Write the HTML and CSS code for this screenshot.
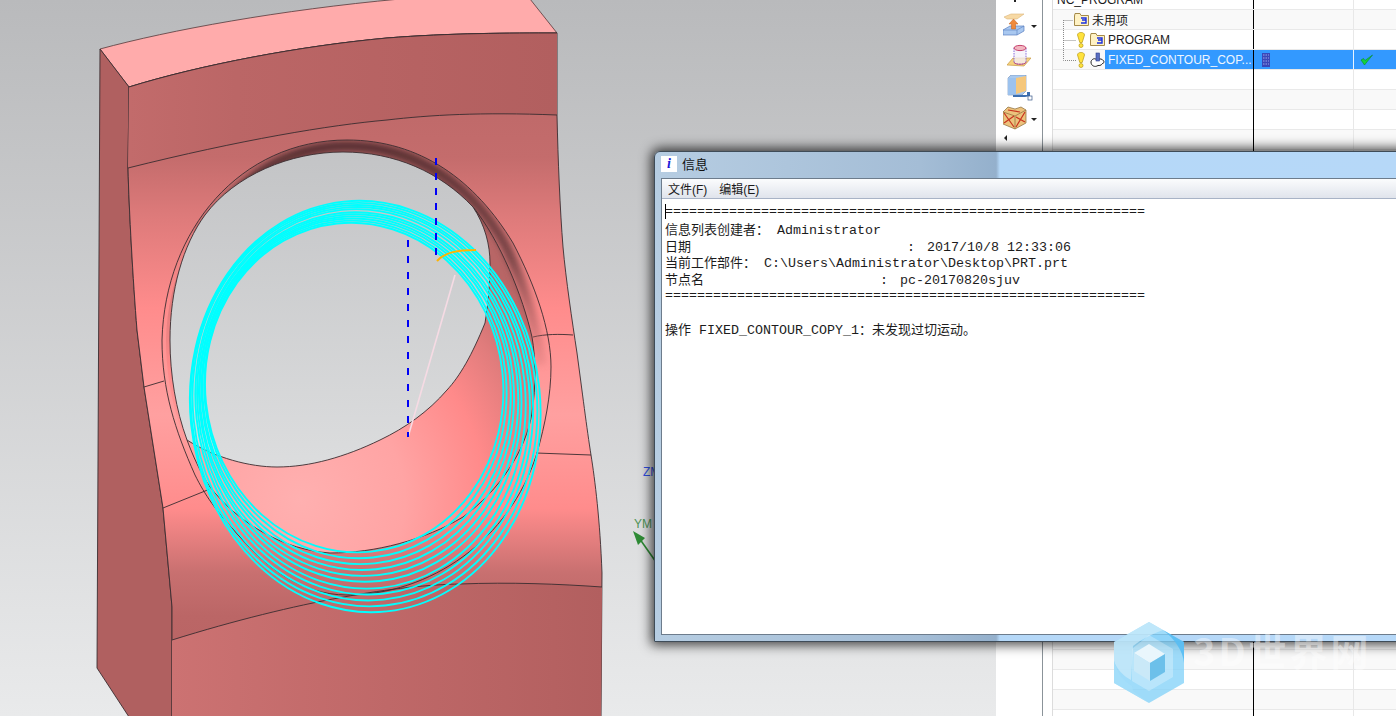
FILE: index.html
```html
<!DOCTYPE html>
<html lang="zh-CN">
<head>
<meta charset="utf-8">
<title>信息</title>
<link rel="stylesheet" href="styles.css">
</head>
<body>
<div class="screen">
  <div class="viewport">
    <svg class="model" width="996" height="716" viewBox="0 0 996 716">
      <defs>
        <linearGradient id="frontGrad" x1="0" y1="0" x2="0" y2="716" gradientUnits="userSpaceOnUse">
          <stop offset="0" stop-color="#b46464"/>
          <stop offset=".22" stop-color="#c46c6c"/>
          <stop offset=".3" stop-color="#dd7a7a"/>
          <stop offset=".43" stop-color="#ff8c8c"/>
          <stop offset=".58" stop-color="#ffa0a0"/>
          <stop offset=".71" stop-color="#ff8c8c"/>
          <stop offset=".8" stop-color="#c87070"/>
          <stop offset=".86" stop-color="#bb6666"/>
          <stop offset="1" stop-color="#b66262"/>
        </linearGradient>
        <linearGradient id="baseGrad" x1="172" y1="0" x2="603" y2="0" gradientUnits="userSpaceOnUse">
          <stop offset="0" stop-color="#cc7272"/>
          <stop offset=".5" stop-color="#bf6868"/>
          <stop offset="1" stop-color="#b25f5f"/>
        </linearGradient>
        <linearGradient id="upperGrad" x1="129" y1="0" x2="557" y2="0" gradientUnits="userSpaceOnUse">
          <stop offset="0" stop-color="#c26b6b"/>
          <stop offset=".25" stop-color="#bb6666"/>
          <stop offset="1" stop-color="#b25f5f"/>
        </linearGradient>
        <radialGradient id="wallGrad" cx="300" cy="500" r="300" gradientUnits="userSpaceOnUse">
          <stop offset="0" stop-color="#ffb0b0"/>
          <stop offset=".35" stop-color="#ffa4a4"/>
          <stop offset=".62" stop-color="#ff8a8a"/>
          <stop offset=".8" stop-color="#e07c7c"/>
          <stop offset="1" stop-color="#b86666"/>
        </radialGradient>
        <linearGradient id="rimGrad" x1="0" y1="146" x2="0" y2="370" gradientUnits="userSpaceOnUse">
          <stop offset="0" stop-color="#5a3234"/>
          <stop offset=".5" stop-color="#7c4648"/>
          <stop offset="1" stop-color="#c87070" stop-opacity=".2"/>
        </linearGradient>
        <linearGradient id="holeGrad" x1="0" y1="150" x2="0" y2="470" gradientUnits="userSpaceOnUse">
          <stop offset="0" stop-color="#c3c4c6"/>
          <stop offset="1" stop-color="#dcddde"/>
        </linearGradient>
        <linearGradient id="bgGrad" x1="0" y1="0" x2="0" y2="1">
          <stop offset="0" stop-color="#b9babc"/>
          <stop offset="1" stop-color="#e9eaeb"/>
        </linearGradient>
        <filter id="soft" x="-20%" y="-20%" width="140%" height="140%"><feGaussianBlur stdDeviation="3"/></filter>
        <clipPath id="rimClip"><path d="M162 340 C165 230 240 140 347 140 C420 140 475 180 513 243 C535 285 551 330 551 367 C551 395 545 425 537 453 C510 540 430 595 347 595 C300 595 265 565 240 537 C215 510 205 495 195 475 C175 430 162 390 162 340 Z"/></clipPath>
      </defs>
      <rect width="996" height="716" fill="url(#bgGrad)"/>
      <path d="M100 49 C170 30 280 10 400 -1 L530 -1 L557 33 C510 33 450 33 387 38 C300 46 200 65 129 87 Z" fill="#ffabab" stroke="#55383a" stroke-width=".8"/>
      <path d="M100 49 L129 87 L128 168 C129 210 133 280 137 330 L144 387 L163 508 L172 607 L172 720 L131 720 L97 668 Z" fill="#b06060" stroke="#3a2c30" stroke-width=".9"/>
      <path d="M129 87 C200 65 300 46 387 38 C450 33 510 33 557 33 L557 115 C558 160 560 210 563 247 C566 280 572 320 577 353 C582 390 587 430 591 455 C595 480 600 520 602 573 L601 720 L172 720 L172 607 L163 508 L144 387 L137 330 C133 280 129 210 128 168 Z" fill="url(#frontGrad)" stroke="#3a2c30" stroke-width=".9"/>
      <path d="M129 87 C200 65 300 46 387 38 C450 33 510 33 557 33 L557 115 C480 112 430 115 387 120 C330 125 240 140 128 168 Z" fill="url(#upperGrad)"/>
      <path d="M172 640 C300 600 400 585 460 584 C510 582 560 584 602 587 L601 720 L172 720 Z" fill="url(#baseGrad)"/>
      <g fill="none" stroke="#3a2c30" stroke-width=".9">
        <path d="M129 87 C200 65 300 46 387 38 C450 33 510 33 557 33"/>
        <path d="M128 168 C240 140 330 125 387 120 C430 115 480 112 557 115"/>
        <path d="M144 387 L164 381"/>
        <path d="M533 337 C545 334 560 334 573 335"/>
        <path d="M163 508 L210 489"/>
        <path d="M536 453 L591 455"/>
        <path d="M172 640 C300 600 400 585 460 584 C510 582 560 584 602 587"/>
      </g>
      <path d="M166 340 C168 235 245 143 347 143 C400 143 445 175 473 207 C500 240 523 297 532 337 C536 360 536 385 532 413 C526 450 500 490 463 517 C425 540 375 553 330 553 C285 550 240 525 210 487 C185 450 166 400 166 340 Z" fill="url(#wallGrad)"/>
      <g clip-path="url(#rimClip)">
        <path d="M200 235 C240 175 290 146 347 146 C420 146 475 190 505 245 C522 280 535 320 541 365" fill="none" stroke="url(#rimGrad)" stroke-width="11" filter="url(#soft)"/>
      </g>
      <path d="M162 340 C165 230 240 140 347 140 C420 140 475 180 513 243 C535 285 551 330 551 367 C551 395 545 425 537 453 C510 540 430 595 347 595 C300 595 265 565 240 537 C215 510 205 495 195 475 C175 430 162 390 162 340 Z" fill="none" stroke="#3a2c30" stroke-width=".9"/>
      <path d="M473 207 C500 240 523 297 532 337 C536 360 536 385 532 413 C526 450 500 490 463 517 C425 540 375 553 330 553 C285 550 240 525 210 487 C200 472 193 456 187 440" fill="none" stroke="#3a2c30" stroke-width=".9"/>
      <path d="M187 440 C176 410 170 375 170 340 C170 290 183 245 205 215 C235 175 290 152 343 152 C395 152 440 172 473 207 C485 225 490 245 490 263 C490 285 488 305 485 323 C472 355 460 376 447 390 C428 412 405 428 380 440 C345 457 310 467 277 467 C250 467 215 458 187 440 Z" fill="url(#holeGrad)" stroke="#3a2c30" stroke-width=".9"/>
      <g class="rings" transform="rotate(-6 360 395)">
        <ellipse cx="355" cy="387" rx="149" ry="165"/>
        <ellipse cx="356" cy="389" rx="151" ry="169"/>
        <ellipse cx="357" cy="391" rx="154" ry="173"/>
        <ellipse cx="358" cy="393" rx="156" ry="177"/>
        <ellipse cx="359" cy="395" rx="159" ry="181"/>
        <ellipse cx="360" cy="397" rx="161" ry="185"/>
        <ellipse cx="361" cy="399" rx="164" ry="190"/>
        <ellipse cx="362" cy="401" rx="167" ry="194"/>
        <ellipse cx="362" cy="403" rx="170" ry="198"/>
        <ellipse cx="363" cy="405" rx="173" ry="202"/>
        <ellipse cx="364" cy="407" rx="175" ry="206"/>
      </g>
      <path d="M408 437 L455 275" stroke="#f6dbe4" stroke-width="1.6" fill="none"/>
      <path d="M436 158 L436 262" stroke="#0000f5" stroke-width="2" stroke-dasharray="7 8" fill="none"/>
      <path d="M408 240 L408 437" stroke="#0000f5" stroke-width="2" stroke-dasharray="7 9" fill="none"/>
      <path d="M437 261 C445 252 458 250 476 250" stroke="#ffb400" stroke-width="2" fill="none"/>
      <text class="axis axis-z" x="643" y="476">ZM</text>
      <text class="axis axis-y" x="634" y="528">YM</text>
      <path d="M637 535 L656 562" stroke="#2e8b35" stroke-width="1.6" fill="none"/>
      <path d="M633 531 L645 538 L638 545 Z" fill="#2e8b35"/>
    </svg>
  </div>

  <div class="panel">
    <div class="toolbar">
      <span class="tick"></span>
      <div class="tool">
        <svg width="24" height="24" viewBox="0 0 24 24">
          <path d="M1 4 L8 1 L21 1 L14 6 L4 6 Z" fill="#f7d9a4" stroke="#dcb67a" stroke-width=".6"/>
          <path d="M0 17 L7 13 L21 13 L21 18 L14 22 L0 22 Z" fill="#a9c8f0" stroke="#5a7fc0" stroke-width=".7"/>
          <path d="M0 17 L14 17 L21 13 M14 17 L14 22" stroke="#5a7fc0" stroke-width=".6" fill="none"/>
          <path d="M10.5 6 L15 11 L12.5 11 L12.5 16 L8.5 16 L8.5 11 L6 11 Z" fill="#f08a3c" stroke="#c06020" stroke-width=".5"/>
        </svg>
        <span class="caret"></span>
      </div>
      <div class="tool tool-shift">
        <svg width="24" height="24" viewBox="0 0 24 24">
          <path d="M0 21 L6 14 L24 14 L17 22 Z" fill="#f5d27e" stroke="#c89b45" stroke-width=".7"/>
          <path d="M7 4 L7 18 C7 21 19 21 19 18 L19 4" fill="#f4f0fa" fill-opacity=".75" stroke="#7a5ad8" stroke-width=".9" stroke-dasharray="1.5 1"/>
          <ellipse cx="13" cy="4" rx="6" ry="2.6" fill="#f2b6c0" stroke="#c03060" stroke-width=".9"/>
          <path d="M7 18 C7 21 19 21 19 18" fill="none" stroke="#c03060" stroke-width=".7"/>
        </svg>
      </div>
      <div class="tool tool-shift">
        <svg width="26" height="26" viewBox="0 0 26 26">
          <path d="M1 3 L4 0 L19 0 L19 16 L15 20 L1 20 Z" fill="#a9c9ee" stroke="#6e8fb8" stroke-width=".6"/>
          <path d="M9 3 L19 1 L19 16 L9 19 Z" fill="#f5c77c"/>
          <path d="M1 3 L9 3 L9 19 L1 20 Z" fill="#9cc2ee"/>
          <path d="M6 20 L20 20 L20 17 L23 17 L23 21 L18 22 L6 22 Z" fill="#3d6fb0"/>
          <rect x="21" y="21" width="4" height="4" fill="#fff" stroke="#39598a" stroke-width=".7"/>
        </svg>
      </div>
      <div class="tool">
        <svg width="24" height="24" viewBox="0 0 24 24">
          <path d="M0 6 L5 1 L12 3 L18 1 L23 4 L23 17 L12 23 L0 18 Z" fill="#ecc27c" stroke="#8a6a3a" stroke-width=".7"/>
          <path d="M0 6 L12 10 L23 4 M12 10 L12 23" fill="none" stroke="#8a6a3a" stroke-width=".7"/>
          <path d="M1 7 L11 21 M11 10 L1 17 M13 11 L22 16 M22 6 L13 21 M5 4 L17 6" fill="none" stroke="#c8331f" stroke-width="1.2"/>
        </svg>
        <span class="caret"></span>
      </div>
      <span class="more"></span>
    </div>
    <div class="gutter"></div>
    <div class="tree">
      <div class="row row-alt"><span class="cell-name name-root">NC_PROGRAM</span></div>
      <div class="row row-alt">
        <div class="cell-name name-l1">
          <svg class="folder" width="15" height="13" viewBox="0 0 15 13"><path d="M.5 3 V12.5 H14.5 V2.5 H7 L6 .5 H1 Z" fill="#fff2c4" stroke="#a58a4a"/><path d="M7 5 H12 V7 H8 M12 7 V10 H7" fill="none" stroke="#1a2fe0" stroke-width="1.4"/></svg>
          <span>未用项</span>
        </div>
      </div>
      <div class="row">
        <div class="cell-name name-l2">
          <svg class="bang" width="8" height="16" viewBox="0 0 8 16"><path d="M.5 3 C.5 -.5 7.5 -.5 7.5 3 L5.2 10.5 H2.8 Z" fill="#ffe23c" stroke="#b89a10" stroke-width=".7"/><circle cx="4" cy="13.5" r="2" fill="#ffe23c" stroke="#b89a10" stroke-width=".7"/></svg>
          <svg class="folder" width="15" height="13" viewBox="0 0 15 13"><path d="M.5 3 V12.5 H14.5 V2.5 H7 L6 .5 H1 Z" fill="#fff2c4" stroke="#a58a4a"/><path d="M7 5 H12 V7 H8 M12 7 V10 H7" fill="none" stroke="#1a2fe0" stroke-width="1.4"/></svg>
          <span>PROGRAM</span>
        </div>
      </div>
      <div class="row row-sel">
        <div class="cell-name name-l2">
          <svg class="bang" width="8" height="16" viewBox="0 0 8 16"><path d="M.5 3 C.5 -.5 7.5 -.5 7.5 3 L5.2 10.5 H2.8 Z" fill="#ffe23c" stroke="#b89a10" stroke-width=".7"/><circle cx="4" cy="13.5" r="2" fill="#ffe23c" stroke="#b89a10" stroke-width=".7"/></svg>
          <svg class="op" width="15" height="16" viewBox="0 0 15 16"><path d="M1 10 C1 8 4 6 5 7 L11 7 C14 8 15 11 13 11 C12 12 11 14 8 13.5 C5 15.5 1 14 1 10 Z" fill="#fff" stroke="#222" stroke-width="1"/><rect x="6" y="1" width="3.5" height="8" fill="#5a6fc0" stroke="#2e3f90" stroke-width=".6"/></svg>
          <span class="sel-text">FIXED_CONTOUR_COP...</span>
        </div>
        <div class="cell-mid">
          <svg width="8" height="14" viewBox="0 0 8 14"><rect width="8" height="14" fill="#3a47b8"/><path d="M1 2 H7 M1 5 H7 M1 8 H7 M1 11 H7" stroke="#9aa6e8" stroke-dasharray="1.5 1"/></svg>
        </div>
        <div class="cell-end">
          <svg width="13" height="12" viewBox="0 0 13 12"><path d="M1 6 L4.5 11 L12.5 1 L5 6.5 L3.5 4.5 Z" fill="#12d23c" stroke="#0a8a2a" stroke-width=".6"/></svg>
        </div>
      </div>
      <svg class="connectors" width="14" height="42" viewBox="0 0 14 42"><path d="M.5 0 V40.5 H13 M.5 20.5 H13 M.5 .5 H10" fill="none" stroke="#8a8a8a" stroke-dasharray="1 1"/></svg>
    </div>
  </div>

  <div class="window">
    <div class="titlebar">
      <span class="app-icon">i</span>
      <span class="title">信息</span>
    </div>
    <div class="client">
      <div class="menubar">
        <span>文件(F)</span>
        <span>编辑(E)</span>
      </div>
      <div class="output">
        <span class="cursor"></span>
        <div class="log">
          <div class="line">============================================================</div>
          <div class="line"><span class="zh">信息列表创建者：</span> Administrator</div>
          <div class="line"><span class="zh">日期</span>                           :<span class="gap"></span>2017/10/8 12:33:06</div>
          <div class="line"><span class="zh">当前工作部件：</span> C:\Users\Administrator\Desktop\PRT.prt</div>
          <div class="line"><span class="zh">节点名</span>                      :<span class="gap"></span>pc-20170820sjuv</div>
          <div class="line">============================================================</div>
          <div class="line"></div>
          <div class="line"><span class="zh">操作</span> FIXED_CONTOUR_COPY_1<span class="zh">：未发现过切运动。</span></div>
        </div>
      </div>
    </div>
  </div>

  <div class="watermark">
    <svg width="72" height="84" viewBox="0 0 72 84">
      <path d="M36 1 L71 21 L71 62 L36 82 L1 62 L1 21 Z" fill="#84d2f8" fill-opacity=".78"/>
      <path d="M36 1 L50 9 C40 13 30 17 20 25 L18 59 C10 55 4 48 1 40 L1 21 Z" fill="#cdebfa" fill-opacity=".7"/>
      <path d="M50 9 L71 21 L71 42 C70 30 62 18 50 9 Z" fill="#58bdf3" fill-opacity=".9"/>
      <path d="M1 40 C4 52 10 60 19 65 L20 70 L36 82 L1 62 Z" fill="#a5def9" fill-opacity=".7"/>
      <path d="M36 14 L60 28 L60 56 L36 70 L19 60 L19 28 Z" fill="#fff" fill-opacity=".28"/>
      <path d="M21 32 L36 23 L52 33 L37 42 Z" fill="#e9f6fc"/>
      <path d="M21 32 L37 42 L37 60 L21 50 Z" fill="#cae9f8"/>
      <path d="M37 42 L52 33 L52 51 L37 60 Z" fill="#6cc0ea"/>
    </svg>
    <span class="wm-text">3D世界网</span>
  </div>
</div>
</body>
</html>
```

FILE: styles.css
```css
* { box-sizing: border-box; }
html, body { margin: 0; padding: 0; height: 100%; overflow: hidden; background: #fff; }

.screen {
  position: relative;
  width: 1396px;
  height: 716px;
  display: flex;
  overflow: hidden;
  font-family: "Liberation Sans", "Noto Sans CJK SC", sans-serif;
}

.viewport { flex: 0 0 996px; height: 716px; }
.model { display: block; }
.rings ellipse { fill: none; stroke: #00ffff; stroke-width: 1.9; }
.axis { font: 12px "Liberation Sans", sans-serif; }
.axis-z { fill: #2f4fe0; }
.axis-y { fill: #4f9456; }

.panel { flex: 1; display: flex; height: 716px; background: #fff; }
.toolbar {
  flex: 0 0 47px;
  position: relative;
  display: flex;
  flex-direction: column;
  padding: 13px 0 0 7px;
  border-right: 1px solid #8b9399;
}
.tool { height: 31px; display: flex; align-items: flex-start; gap: 4px; }
.tool svg { display: block; flex: none; }
.tool-shift { padding-left: 4px; }
.caret {
  align-self: center;
  margin: -5px 0 0 0;
  border-left: 3px solid transparent;
  border-right: 3px solid transparent;
  border-top: 3px solid #222;
}
.tick { position: absolute; left: 18px; top: 0; width: 2px; height: 2px; background: #222; }
.more {
  position: absolute;
  left: 8px;
  top: 135px;
  border-top: 3px solid transparent;
  border-bottom: 3px solid transparent;
  border-right: 3px solid #222;
}
.gutter { flex: 0 0 10px; border-right: 1px solid #dcdcdc; }

.tree {
  flex: 1;
  position: relative;
  height: 716px;
  font-size: 12px;
  color: #1c1c1c;
  background-color: #fff;
  background-image:
    linear-gradient(#000, #000),
    linear-gradient(#e8e8e8, #e8e8e8),
    repeating-linear-gradient(#f9f9f9 0, #f9f9f9 19px, #e9e9e9 19px, #e9e9e9 20px, #fff 20px, #fff 39px, #e9e9e9 39px, #e9e9e9 40px);
  background-size: 1px 100%, 1px 100%, 100% 100%;
  background-position: 200px 0, 300px 0, 0 10px;
  background-repeat: no-repeat, no-repeat, repeat;
}
.row {
  position: relative;
  height: 20px;
  display: flex;
  align-items: center;
  border-bottom: 1px solid #e9e9e9;
  white-space: nowrap;
}
.row:first-child { margin-top: -10px; }
.row-sel { border-bottom-color: transparent; background: linear-gradient(#3399ff, #3399ff) no-repeat 52px 0 / 100% 100%; }
.cell-name { flex: 0 0 200px; height: 100%; display: flex; align-items: center; }
.name-root { padding-left: 4px; line-height: 20px; }
.name-l1 { padding-left: 21px; gap: 3px; }
.name-l2 { padding-left: 24px; }
.folder, .bang, .op { display: block; flex: none; }
.bang { margin-right: 5px; }
.name-l2 .folder { margin-right: 3px; }
.sel-text { color: #eef6ff; padding-left: 3px; }
.cell-mid { flex: 0 0 100px; height: 100%; display: flex; align-items: center; padding-left: 8px; border-left: 1px solid #000; }
.cell-end { flex: 1; height: 100%; display: flex; align-items: center; padding-left: 6px; border-left: 1px solid #eaf4ff; }
.connectors { position: absolute; left: 10px; top: 20px; }

.window {
  position: absolute;
  left: 654px;
  top: 151px;
  width: 760px;
  height: 491px;
  display: flex;
  flex-direction: column;
  padding: 0 7px 6px 6px;
  border: 1px solid #3f4c58;
  border-radius: 6px 6px 0 0;
  background: linear-gradient(90deg, #b6cde2 0, #a4bdd6 35%, #94b0cc 45%, #b5d8f8 45.5%, #b6d8f8 100%);
  box-shadow: 0 0 12px 3px rgba(0, 0, 0, .72);
}
.titlebar { flex: 0 0 26px; display: flex; align-items: center; gap: 5px; padding-bottom: 3px; font-size: 13px; color: #111; }
.app-icon {
  width: 16px;
  height: 16px;
  background: #fff;
  color: #1a1ad8;
  font: italic bold 14px/16px "Liberation Serif", serif;
  text-align: center;
}
.client { flex: 1; display: flex; flex-direction: column; background: #fff; border: 1px solid #6d7c8c; border-right: 0; min-height: 0; }
.menubar {
  flex: 0 0 20px;
  display: flex;
  align-items: center;
  gap: 12px;
  padding-left: 6px;
  font-size: 12px;
  color: #1a1a1a;
  background: linear-gradient(#fbfcfd, #e0e4ec);
  border-bottom: 1px solid #a8b3c6;
}
.output { flex: 1; position: relative; padding: 5px 0 0 3px; }
.log { font: 13.33px/16.75px "Liberation Mono", "Noto Sans CJK SC", monospace; color: #1c1c1c; }
.line { height: 16.75px; white-space: pre; }
.zh { font: 13px/16.75px "Noto Sans CJK SC", sans-serif; }
.gap { display: inline-block; width: 12px; }
.cursor { position: absolute; left: 3px; top: 5px; width: 1px; height: 15px; background: #000; }

.watermark {
  position: absolute;
  left: 1113px;
  top: 621px;
  display: flex;
  align-items: flex-start;
  gap: 8px;
}
.watermark svg { display: block; flex: none; }
.wm-text {
  font: bold 38px/1 "Noto Sans CJK SC", sans-serif;
  letter-spacing: 3px;
  color: rgba(255, 255, 255, .42);
  white-space: nowrap;
  margin-top: 10px;
}
```
